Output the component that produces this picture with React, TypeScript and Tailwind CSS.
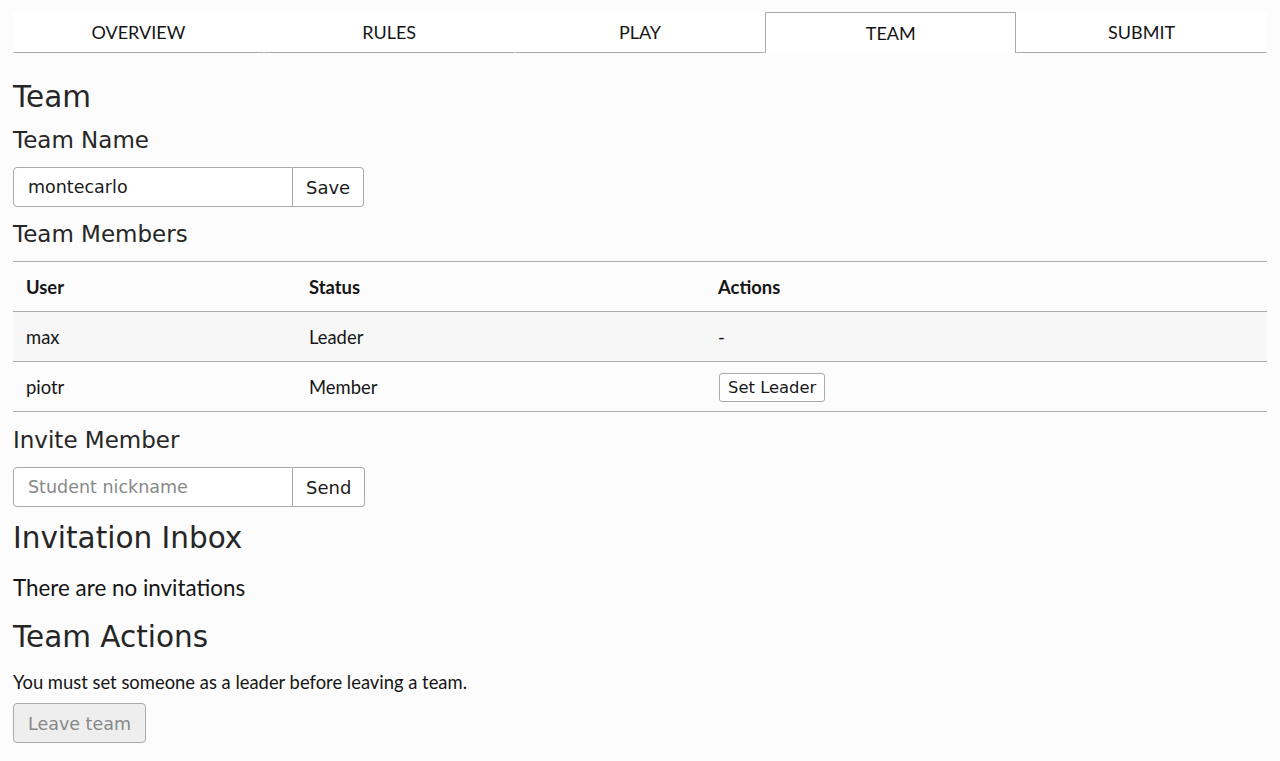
import React from "react";

const tabs = ["OVERVIEW", "RULES", "PLAY", "TEAM", "SUBMIT"];

const members = [
  { user: "max", status: "Leader", leader: true },
  { user: "piotr", status: "Member", leader: false },
];

const heading = "font-['DejaVu_Sans',sans-serif] text-[#262626]";
const lato = "font-['Lato',sans-serif] text-[#151515]";
const ui = "font-['DejaVu_Sans',sans-serif]";

function InlineForm({ value, placeholder, label }: { value?: string; placeholder?: string; label: string }) {
  return (
    <div className="flex h-[40px]">
      <input
        readOnly
        value={value ?? ""}
        placeholder={placeholder}
        className={`${ui} w-[280px] h-full border border-[#aaa] rounded-l-[4px] bg-white pl-[14px] text-[17.5px] text-[#1a1a1a] placeholder:text-[#888] outline-none`}
      />
      <button className={`${ui} h-full border border-l-0 border-[#aaa] rounded-r-[4px] bg-white px-[13px] text-[18px] text-[#1a1a1a]`}>
        {label}
      </button>
    </div>
  );
}

export default function App() {
  return (
    <div className="min-h-[761px] bg-[#fcfcfc] px-[13px] pb-[16px]">
      <nav className="flex pt-[12px]">
        {tabs.map((t) => (
          <div
            key={t}
            className={`${lato} flex-1 h-[41px] flex items-center justify-center text-[18px] bg-white ${
              t === "TEAM"
                ? "border-t border-x border-[#aaa] pt-[1px]"
                : "border-b border-x border-b-[#aaa] border-x-transparent"
            }`}
          >
            {t}
          </div>
        ))}
      </nav>

      <h1 className={`${heading} text-[29.5px] leading-[34px] mt-[27px]`}>Team</h1>
      <h2 className={`${heading} text-[23px] leading-[26px] mt-[13px]`}>Team Name</h2>
      <div className="mt-[14px]">
        <InlineForm value="montecarlo" label="Save" />
      </div>

      <h2 className={`${heading} text-[23px] leading-[26px] mt-[14px]`}>Team Members</h2>
      <table className={`${lato} mt-[14px] w-full border-collapse text-[18.4px]`}>
        <thead>
          <tr className="h-[50px] border-y border-[#aaa]">
            <th className="w-[283px] pl-[13px] pt-[2px] text-left font-bold">User</th>
            <th className="w-[409px] pl-[13px] pt-[2px] text-left font-bold">Status</th>
            <th className="pl-[13px] pt-[2px] text-left font-bold">Actions</th>
          </tr>
        </thead>
        <tbody>
          {members.map((m, i) => (
            <tr key={m.user} className={`h-[50px] border-b border-[#aaa] ${i === 0 ? "bg-[#f7f7f7]" : ""}`}>
              <td className="pl-[13px] pt-[2px]">{m.user}</td>
              <td className="pl-[13px] pt-[2px]">{m.status}</td>
              <td className="pl-[13px] pt-[2px]">
                {m.leader ? (
                  "-"
                ) : (
                  <button className={`${ui} ml-px h-[29px] px-[8px] border border-[#aaa] rounded-[3px] bg-white text-[16.4px] text-[#1a1a1a] leading-none`}>
                    Set Leader
                  </button>
                )}
              </td>
            </tr>
          ))}
        </tbody>
      </table>

      <h2 className={`${heading} text-[23px] leading-[26px] mt-[15px]`}>Invite Member</h2>
      <div className="mt-[14px]">
        <InlineForm placeholder="Student nickname" label="Send" />
      </div>

      <h1 className={`${heading} text-[29.5px] leading-[34px] mt-[14px]`}>Invitation Inbox</h1>
      <p className={`${lato} text-[22.4px] leading-[26px] mt-[20px]`}>There are no invitations</p>

      <h1 className={`${heading} text-[29.5px] leading-[34px] mt-[19px]`}>Team Actions</h1>
      <p className={`${lato} text-[18.4px] leading-[22px] mt-[17px]`}>You must set someone as a leader before leaving a team.</p>
      <button
        disabled
        className={`${ui} mt-[10px] h-[40px] px-[14px] pt-[3px] border border-[#aaa] rounded-[4px] bg-[#eee] text-[17.5px] text-[#888]`}
      >
        Leave team
      </button>
    </div>
  );
}
